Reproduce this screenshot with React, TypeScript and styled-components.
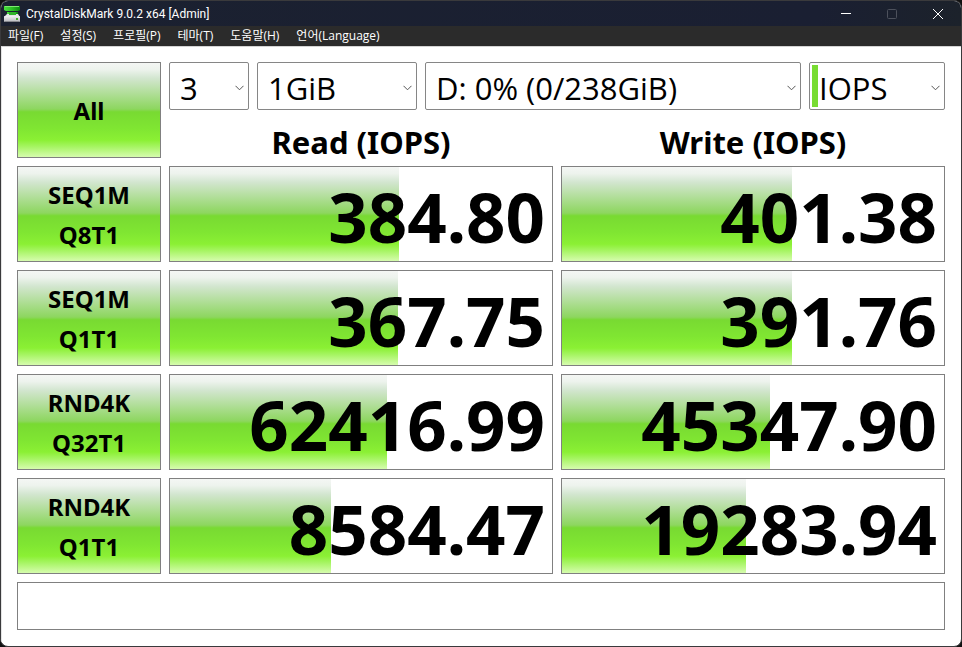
import React from "react";
import styled, { createGlobalStyle } from "styled-components";

const GlobalStyle = createGlobalStyle`
  * { box-sizing: border-box; }
  html, body, #root { height: 100%; margin: 0; }
  body { background: #111; font-family: "Noto Sans", "Noto Sans CJK KR", sans-serif; color: #000; }
  button, select, input { font: inherit; color: inherit; margin: 0; }
`;

const gloss =
  "linear-gradient(to bottom, #f4f6f4 0%, #edf3ed 7%, #d3e6d0 16%, #8dd65f 49%, #78da32 52%, #80e632 70%, #8bf034 82%, #a2f45c 88%, #d6fcae 100%)";

const Window = styled.div`
  display: flex;
  flex-direction: column;
  min-height: 100%;
  border: 1px solid #3a3a3c;
  border-radius: 8px;
  background: #fff;
  overflow: hidden;
`;

const TitleBar = styled.header`
  display: flex;
  align-items: center;
  height: 25px;
  padding-left: 3px;
  background: linear-gradient(to right, #1b2130, #1a1f32 85%, #1c222b);
  color: #fff;
`;

const Title = styled.h1`
  flex: 1;
  margin: 0 0 0 5px;
  font: 400 12px Roboto, "Noto Sans", sans-serif;
  line-height: 24px;
  white-space: nowrap;
`;

const Caption = styled.button`
  display: flex;
  align-items: center;
  justify-content: center;
  width: 46px;
  height: 25px;
  padding: 0;
  border: 0;
  background: none;
`;

const MenuBar = styled.nav`
  display: flex;
  gap: 17px;
  height: 20px;
  padding-left: 7px;
  background: #2b2b2b;
`;

const MenuItem = styled.button`
  padding: 0;
  border: 0;
  background: none;
  color: #fff;
  font: 400 12px "Open Sans", "Noto Sans CJK KR", sans-serif;
  line-height: 18px;
  white-space: nowrap;
`;

const Main = styled.main`
  display: grid;
  grid-template-columns: 144px 1fr 1fr;
  grid-template-rows: 96px repeat(4, 96px) 48px;
  gap: 8px;
  padding: 15px 16px 16px 15px;
  border-top: 1px solid #d4d4d4;
  border-left: 1px solid #e4e4e4;
`;

const TestButton = styled.button`
  display: flex;
  flex-direction: column;
  align-items: center;
  justify-content: center;
  padding: 2px 0 0;
  border: 1px solid #808080;
  background: ${gloss};
  font-size: 24px;
  font-weight: 700;
  line-height: 40px;
`;

const Settings = styled.div`
  grid-column: 2 / 4;
  display: flex;
  flex-direction: column;
`;

const Selectors = styled.div`
  flex: none;
  display: grid;
  grid-template-columns: 80px 160px 1fr 136px;
  gap: 8px;
  height: 48px;
`;

const SelectBox = styled.div<{ $marked?: boolean }>`
  position: relative;
  display: flex;
  padding: 2px;
  border: 1px solid #868686;
  border-radius: 2px;
  background: #fff;

  &::before {
    content: ${(p) => (p.$marked ? '""' : "none")};
    width: 6px;
    background: #78dc32;
  }

  svg {
    position: absolute;
    right: 4px;
    top: 22px;
    pointer-events: none;
  }
`;

const Select = styled.select<{ $inset: number }>`
  flex: 1;
  min-width: 0;
  appearance: none;
  border: 0;
  padding: 4px 20px 0 ${(p) => p.$inset}px;
  background: transparent;
  font-family: "Open Sans", "Noto Sans", sans-serif;
  font-size: 31px;
  line-height: 36px;
`;

const Headings = styled.div`
  display: grid;
  grid-template-columns: 1fr 1fr;
  gap: 8px;
`;

const Heading = styled.h2`
  margin: 0;
  padding-top: 10px;
  font-size: 31px;
  font-weight: 700;
  line-height: 44px;
  text-align: center;
  white-space: nowrap;
`;

const Meter = styled.output`
  display: flex;
  align-items: center;
  justify-content: flex-end;
  padding: 4px 7px 0 0;
  border: 1px solid #808080;
  background: ${gloss} no-repeat left top;
  font-size: 69px;
  font-weight: 700;
  line-height: 86px;
`;

const StatusInput = styled.input`
  grid-column: 1 / 4;
  width: 100%;
  border: 1px solid #808080;
  background: #fff;
  padding: 0 8px;
  font-size: 24px;
`;

const AppIcon = () => (
  <svg width="17" height="18" viewBox="0 0 17 18" aria-hidden="true">
    <defs>
      <linearGradient id="green" x1="0" y1="0" x2="1" y2="0">
        <stop offset="0" stopColor="#4ade3e" />
        <stop offset="0.5" stopColor="#2cc024" />
        <stop offset="1" stopColor="#0a8a10" />
      </linearGradient>
      <linearGradient id="metal" x1="0" y1="0" x2="0" y2="1">
        <stop offset="0" stopColor="#f2f2f4" />
        <stop offset="1" stopColor="#b4b6ba" />
      </linearGradient>
    </defs>
    <path d="M0 1h16v4l-2 1H2L0 5z" fill="url(#green)" />
    <path d="M1 1h14v1H1z" fill="#7cec70" />
    <path d="M3 7h11v3H3z" fill="url(#green)" />
    <path d="M3 9h11l2 3H0z" fill="#e4e5e8" />
    <path d="M5 7h7v3H5z" fill="#2fb428" />
    <rect x="0" y="11" width="16" height="6" rx="1" fill="url(#metal)" />
    <path d="M1 16.500h14" stroke="#85878c" />
    <rect x="12" y="13" width="2" height="2" fill="#46b32d" />
  </svg>
);

const Chevron = () => (
  <svg width="9" height="6" viewBox="0 0 9 6" fill="none" stroke="#555" aria-hidden="true">
    <path d="M0.500 0.800 4.500 4.800 8.500 0.800" />
  </svg>
);

const menus = ["파일(F)", "설정(S)", "프로필(P)", "테마(T)", "도움말(H)", "언어(Language)"];

const tests = [
  { name: "SEQ1M", mode: "Q8T1", read: "384.80", readFill: 60, write: "401.38", writeFill: 60.3 },
  { name: "SEQ1M", mode: "Q1T1", read: "367.75", readFill: 59.7, write: "391.76", writeFill: 60.3 },
  { name: "RND4K", mode: "Q32T1", read: "62416.99", readFill: 56.9, write: "45347.90", writeFill: 54.5 },
  { name: "RND4K", mode: "Q1T1", read: "8584.47", readFill: 42.2, write: "19283.94", writeFill: 48.2 },
];

const selectors = [
  { label: "Test count", value: "3", inset: 8, marked: false },
  { label: "Test size", value: "1GiB", inset: 8, marked: false },
  { label: "Drive", value: "D: 0% (0/238GiB)", inset: 8, marked: false },
  { label: "Unit", value: "IOPS", inset: 1, marked: true },
];

export default function App() {
  return (
    <>
      <GlobalStyle />
      <Window>
        <TitleBar>
          <AppIcon />
          <Title>CrystalDiskMark 9.0.2 x64 [Admin]</Title>
          <Caption aria-label="Minimize">
            <svg width="10" height="10" stroke="#fff"><path d="M0 4.500h10" /></svg>
          </Caption>
          <Caption aria-label="Maximize" disabled>
            <svg width="10" height="10" fill="none" stroke="#4d515c"><rect x="0.500" y="0.500" width="9" height="9" rx="1" /></svg>
          </Caption>
          <Caption aria-label="Close">
            <svg width="10" height="10" stroke="#fff"><path d="M0 0 10 10M10 0 0 10" /></svg>
          </Caption>
        </TitleBar>
        <MenuBar>
          {menus.map((m) => <MenuItem key={m}>{m}</MenuItem>)}
        </MenuBar>
        <Main>
          <TestButton>All</TestButton>
          <Settings>
            <Selectors>
              {selectors.map((s) => (
                <SelectBox key={s.label} $marked={s.marked}>
                  <Select aria-label={s.label} $inset={s.inset} defaultValue={s.value}>
                    <option>{s.value}</option>
                  </Select>
                  <Chevron />
                </SelectBox>
              ))}
            </Selectors>
            <Headings>
              <Heading>Read (IOPS)</Heading>
              <Heading>Write (IOPS)</Heading>
            </Headings>
          </Settings>
          {tests.map((t) => (
            <React.Fragment key={t.name + t.mode}>
              <TestButton>
                <span>{t.name}</span>
                <span>{t.mode}</span>
              </TestButton>
              <Meter style={{ backgroundSize: `${t.readFill}% 100%` }}>{t.read}</Meter>
              <Meter style={{ backgroundSize: `${t.writeFill}% 100%` }}>{t.write}</Meter>
            </React.Fragment>
          ))}
          <StatusInput aria-label="Comment" />
        </Main>
      </Window>
    </>
  );
}
